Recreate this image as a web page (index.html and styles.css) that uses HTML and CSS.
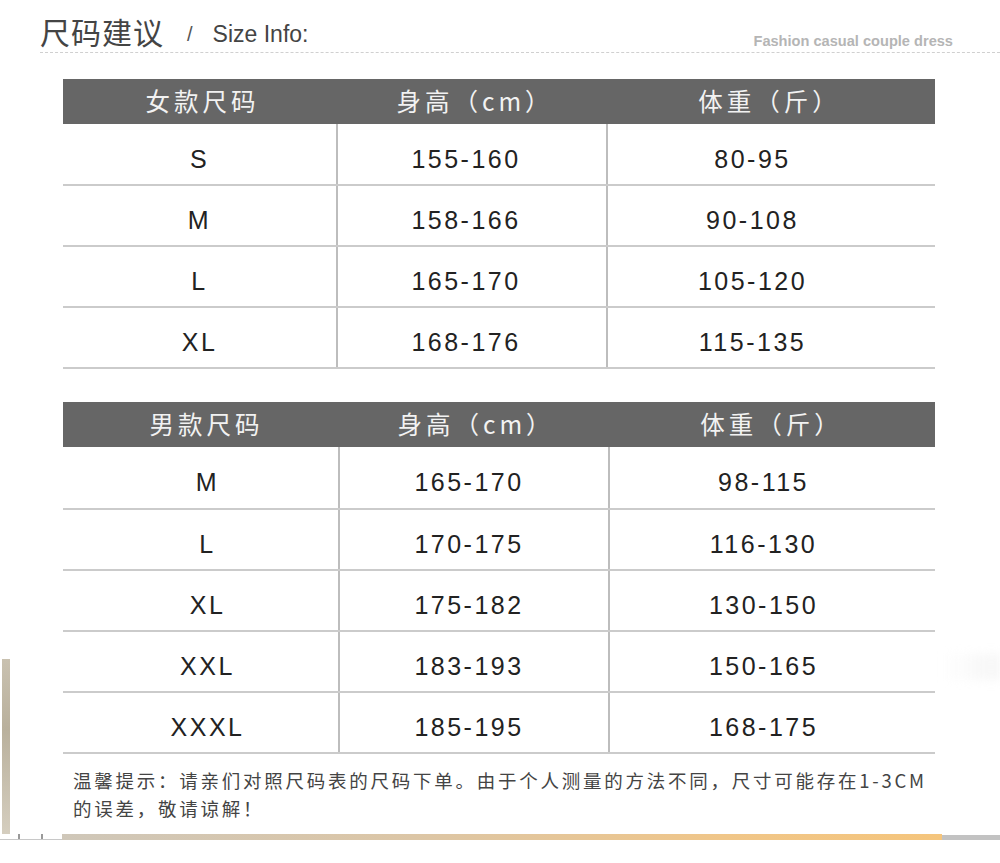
FILE: index.html
```html
<!DOCTYPE html>
<html lang="zh-CN">
<head>
<meta charset="utf-8">
<title>尺码建议 / Size Info</title>
<link rel="stylesheet" href="styles.css">
</head>
<body>
<div class="page">
  <div class="side-bar"></div>
  <div class="side-shadow"></div>

  <header class="top">
    <h1 class="title">尺码建议</h1>
    <span class="slash">/</span>
    <span class="title-en">Size Info:</span>
    <span class="tagline">Fashion casual couple dress</span>
  </header>

  <section class="size-table women">
    <div class="row head">
      <div class="cell c1">女款尺码</div>
      <div class="cell c2">身高（cm）</div>
      <div class="cell c3">体重（斤）</div>
    </div>
    <div class="row r1"><div class="cell c1">S</div><div class="cell c2">155-160</div><div class="cell c3">80-95</div></div>
    <div class="row"><div class="cell c1">M</div><div class="cell c2">158-166</div><div class="cell c3">90-108</div></div>
    <div class="row"><div class="cell c1">L</div><div class="cell c2">165-170</div><div class="cell c3">105-120</div></div>
    <div class="row"><div class="cell c1">XL</div><div class="cell c2">168-176</div><div class="cell c3">115-135</div></div>
  </section>

  <section class="size-table men">
    <div class="row head">
      <div class="cell c1">男款尺码</div>
      <div class="cell c2">身高（cm）</div>
      <div class="cell c3">体重（斤）</div>
    </div>
    <div class="row r1"><div class="cell c1">M</div><div class="cell c2">165-170</div><div class="cell c3">98-115</div></div>
    <div class="row"><div class="cell c1">L</div><div class="cell c2">170-175</div><div class="cell c3">116-130</div></div>
    <div class="row"><div class="cell c1">XL</div><div class="cell c2">175-182</div><div class="cell c3">130-150</div></div>
    <div class="row"><div class="cell c1">XXL</div><div class="cell c2">183-193</div><div class="cell c3">150-165</div></div>
    <div class="row"><div class="cell c1">XXXL</div><div class="cell c2">185-195</div><div class="cell c3">168-175</div></div>
  </section>

  <p class="note">
    <span class="line">温馨提示：请亲们对照尺码表的尺码下单。由于个人测量的方法不同，尺寸可能存在1-3CM</span>
    <span class="line">的误差，敬请谅解！</span>
  </p>

  <div class="bottom-strip">
    <div class="marks"><span class="m1"></span><span class="m2"></span></div>
    <div class="grad"></div>
    <div class="grey"></div>
  </div>
</div>
</body>
</html>
```

FILE: styles.css
```css
* { box-sizing: border-box; }
html, body {
  margin: 0;
  padding: 0;
  background: #fff;
}
body {
  font-family: "Liberation Sans", Arial, "Noto Sans CJK SC", sans-serif;
  color: #222;
}
.page {
  position: relative;
  width: 1000px;
  height: 863px;
  overflow: hidden;
}

/* decorations */
.side-bar {
  position: absolute;
  left: 2px;
  top: 659px;
  width: 8px;
  height: 175px;
  background: linear-gradient(to bottom, #c9c1b0, #b9b09c 40%, #d5cebf);
}
.side-shadow {
  position: absolute;
  right: 0;
  top: 654px;
  width: 60px;
  height: 26px;
  background: linear-gradient(to right, rgba(255,255,255,0), rgba(235,235,235,0.45));
  filter: blur(5px);
}

/* header */
.top {
  display: flex;
  align-items: flex-end;
  margin-left: 40px;
  height: 53px;
  padding-bottom: 3px;
  border-bottom: 1px dashed #d0d0d0;
}
.title {
  margin: 0;
  font-family: "Noto Sans CJK SC", sans-serif;
  font-weight: 400;
  font-size: 30px;
  line-height: 36px;
  letter-spacing: 1px;
  color: #444;
}
.slash {
  font-size: 20px;
  line-height: 28px;
  color: #555;
  margin-left: 23px;
  margin-bottom: 1px;
}
.title-en {
  font-size: 23px;
  line-height: 28px;
  color: #444;
  margin-left: 20px;
  margin-bottom: 1px;
  letter-spacing: 0;
}
.tagline {
  margin-left: auto;
  margin-right: 47px;
  margin-bottom: -1px;
  font-weight: 700;
  font-size: 14.6px;
  line-height: 18px;
  color: #b5b5b5;
}

/* tables */
.size-table {
  margin-left: 63px;
  width: 872px;
}
.women { margin-top: 26px; }
.men { margin-top: 33px; }

.row {
  display: grid;
  height: 61px;
  border-bottom: 2px solid #cbcbcb;
}
.women .row { grid-template-columns: 273px 270px 329px; }
.men .row { grid-template-columns: 275px 270px 327px; }

.row.head {
  height: 45px;
  background: #666;
  border-bottom: none;
}
.women .row.r1 { height: 62px; }
.men .row.r1 { height: 63px; }

.cell {
  display: flex;
  align-items: center;
  justify-content: center;
  font-size: 25px;
  letter-spacing: 2.5px;
  color: #222;
}
.row:not(.head) .cell {
  padding-top: 10px;
}
.row:not(.head) .c2,
.row:not(.head) .c3 {
  border-left: 2px solid #bdbdbd;
}
.head .cell {
  font-family: "Noto Sans CJK SC", sans-serif;
  font-size: 24.5px;
  letter-spacing: 4px;
  color: #f2f2f2;
  padding-bottom: 2px;
}

/* column text offsets */
.women .head .c1 { padding-left: 6px; }
.women .head .c2 { padding-left: 8px; }
.women .row:not(.head) .c2 { padding-right: 12px; }
.women .row:not(.head) .c3 { padding-right: 38px; }
.women .head .c3 { padding-right: 2px; }
.men .row:not(.head) .c1 { padding-left: 14px; }
.men .head .c1 { padding-left: 12px; }
.men .head .c2 { padding-left: 6px; }
.men .row:not(.head) .c2 { padding-right: 10px; }
.men .row:not(.head) .c3 { padding-right: 18px; }
.men .head .c3 { padding-right: 0; }

/* note */
.note {
  margin: 12px 0 0 73px;
  font-family: "Noto Sans CJK SC", sans-serif;
  font-size: 18.5px;
  line-height: 28px;
  letter-spacing: 2.75px;
  color: #444;
}
.note .line {
  display: block;
  white-space: nowrap;
}

/* bottom strip */
.bottom-strip {
  display: flex;
  align-items: flex-end;
  margin-top: 11px;
  height: 7px;
}
.marks {
  position: relative;
  width: 62px;
  height: 7px;
  border-bottom: 1px solid #c8c8c8;
}
.marks .m1, .marks .m2 {
  position: absolute;
  bottom: 0;
  width: 2px;
  height: 5px;
  background: #999;
}
.marks .m1 { left: 18px; }
.marks .m2 { left: 41px; }
.grad {
  width: 880px;
  height: 6px;
  background: linear-gradient(to right, #cfc7b9, #dcc6a6 40%, #f0c689 75%, #f5c57c);
}
.grey {
  flex: 1;
  height: 5px;
  background: #c2c2c2;
}
```
